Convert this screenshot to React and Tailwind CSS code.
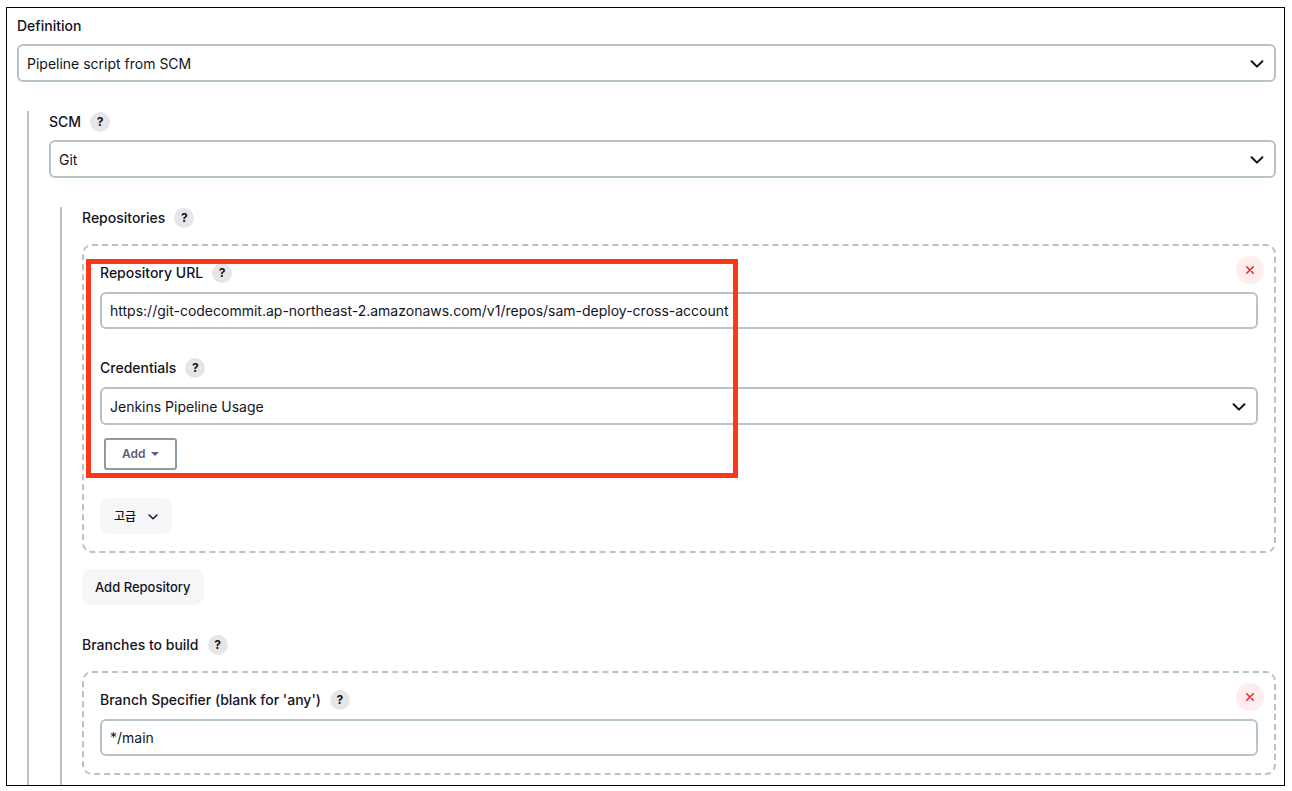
import { useId, useState } from 'react';

function HelpButton({ topic }) {
  return (
    <button
      type="button"
      aria-label={`Help for ${topic}`}
      className="flex h-5 w-5 items-center justify-center rounded-full bg-[#e6e6e6] text-xs font-bold text-[#14141f]"
    >
      ?
    </button>
  );
}

function FieldLabel({ text, htmlFor, help = true }) {
  return (
    <div className="flex h-5 items-center gap-[9px]">
      {htmlFor ? (
        <label htmlFor={htmlFor} className="text-sm font-medium">{text}</label>
      ) : (
        <span className="text-sm font-medium">{text}</span>
      )}
      {help && <HelpButton topic={text} />}
    </div>
  );
}

function Chevron({ className }) {
  return (
    <svg
      viewBox="0 0 14 8"
      fill="none"
      stroke="currentColor"
      strokeWidth="2"
      strokeLinecap="round"
      strokeLinejoin="round"
      aria-hidden="true"
      className={className}
    >
      <path d="M1.6 1.2 7 6.6l5.4-5.4" />
    </svg>
  );
}

function SelectBox({ id, options }) {
  return (
    <div className="relative">
      <select
        id={id}
        className="block h-[38px] w-full appearance-none rounded-md border-2 border-[#b7c3cb] bg-white pt-0.5 pr-10 pl-2 text-sm"
      >
        {options.map((option) => (
          <option key={option}>{option}</option>
        ))}
      </select>
      <Chevron className="pointer-events-none absolute top-4 right-3 h-2 w-3.5" />
    </div>
  );
}

function TextBox({ id, initialValue }) {
  const [value, setValue] = useState(initialValue);

  return (
    <input
      id={id}
      type="text"
      value={value}
      onChange={(e) => setValue(e.target.value)}
      className="block h-[37px] w-full rounded-md border-2 border-[#b7c3cb] bg-white px-2 text-sm"
    />
  );
}

function RepeatableChunk({ children }) {
  return (
    <div className="relative mt-4 rounded-[10px] border-2 border-dashed border-[#b7c3cb] px-4 py-[17px]">
      {children}
      <button
        type="button"
        aria-label="Delete"
        className="absolute top-2.5 right-2.5 flex h-7 w-7 items-center justify-center rounded-full bg-[#ffeded] text-[#e6202a]"
      >
        <svg viewBox="0 0 8 8" stroke="currentColor" strokeWidth="1.4" strokeLinecap="round" className="h-2 w-2" aria-hidden="true">
          <path d="M.7.7l6.6 6.6M7.3.7.7 7.3" />
        </svg>
      </button>
    </div>
  );
}

function App() {
  const id = useId();

  return (
    <main className="mt-[7px] mr-[7px] mb-1.5 ml-1.5 border border-black bg-white pt-2 pr-2 pl-2.5 font-['Inter','Noto_Sans_CJK_KR',sans-serif] text-[#14141f]">
      <FieldLabel text="Definition" htmlFor={`${id}-definition`} help={false} />
      <div className="mt-2">
        <SelectBox id={`${id}-definition`} options={['Pipeline script from SCM', 'Pipeline script']} />
      </div>

      {/* SCM settings */}
      <section className="mt-[29px] ml-2.5 border-l-2 border-[#b7c3cb] pt-px pl-5">
        <FieldLabel text="SCM" htmlFor={`${id}-scm`} />
        <div className="mt-2">
          <SelectBox id={`${id}-scm`} options={['Git', 'None']} />
        </div>

        {/* Git settings */}
        <div className="mt-[29px] ml-[11px] border-l-2 border-[#b7c3cb] pt-px pb-2.5 pl-5">
          <FieldLabel text="Repositories" />
          <RepeatableChunk>
            <FieldLabel text="Repository URL" htmlFor={`${id}-url`} />
            <div className="mt-[9px]">
              <TextBox
                id={`${id}-url`}
                initialValue="https://git-codecommit.ap-northeast-2.amazonaws.com/v1/repos/sam-deploy-cross-account"
              />
            </div>

            <div className="mt-[29px]">
              <FieldLabel text="Credentials" htmlFor={`${id}-credentials`} />
            </div>
            <div className="mt-[9px]">
              <SelectBox id={`${id}-credentials`} options={['Jenkins Pipeline Usage', '- none -']} />
            </div>
            <button
              type="button"
              className="mt-[13px] ml-1 flex h-8 items-center gap-[5px] rounded-[3px] border-2 border-[#8c9aa3] px-4 text-xs font-semibold text-[#5f5b78]"
            >
              Add
              <svg viewBox="0 0 8 4" fill="currentColor" className="h-1 w-2" aria-hidden="true">
                <path d="M0 0h8L4 4z" />
              </svg>
            </button>

            <button
              type="button"
              className="mt-7 flex h-9 items-center gap-3 rounded-[10px] bg-[#f6f6f9] px-3.5 pt-0.5 text-xs font-medium"
            >
              고급
              <Chevron className="h-1.5 w-2.5" />
            </button>

            {/* Highlight around the repository fields */}
            <div className="pointer-events-none absolute top-[13px] left-0.5 h-[219px] w-[652px] border-5 border-[#ff3719]"></div>
          </RepeatableChunk>

          <button type="button" className="mt-4 flex h-9 items-center rounded-[10px] bg-[#f6f6f9] px-[13px] pt-0.5 text-[13px] font-medium">
            Add Repository
          </button>

          <div className="mt-[30px]">
            <FieldLabel text="Branches to build" />
          </div>
          <RepeatableChunk>
            <FieldLabel text="Branch Specifier (blank for 'any')" htmlFor={`${id}-branch`} />
            <div className="mt-[9px]">
              <TextBox id={`${id}-branch`} initialValue="*/main" />
            </div>
          </RepeatableChunk>
        </div>
      </section>
    </main>
  );
}

export default App;
